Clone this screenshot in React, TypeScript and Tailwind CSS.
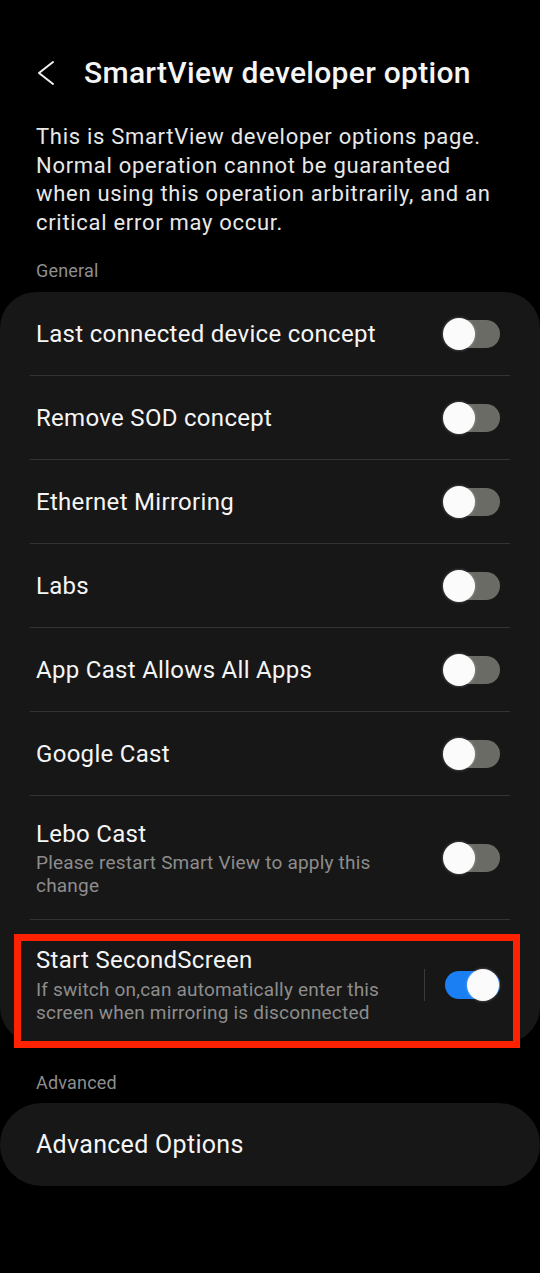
const generalOptions = [
  { title: "Last connected device concept" },
  { title: "Remove SOD concept" },
  { title: "Ethernet Mirroring" },
  { title: "Labs" },
  { title: "App Cast Allows All Apps" },
  { title: "Google Cast" },
];

function Toggle({ on = false }: { on?: boolean }) {
  return (
    <div className="relative w-[57px] h-[32px] shrink-0">
      <div
        className={
          "absolute left-[2px] right-0 top-[2px] h-[28px] rounded-full " +
          (on ? "bg-[#1a7ff2]" : "bg-[#6b6b66]")
        }
      />
      <div
        className={
          "absolute top-0 w-[32px] h-[32px] rounded-full bg-[#fbfbfb] shadow-[0_0_3px_rgba(255,255,255,0.35)] " +
          (on ? "right-[1px]" : "left-0")
        }
      />
    </div>
  );
}

function Divider() {
  return <div className="h-px mx-[30px] bg-[#333333]" />;
}

export default function App() {
  return (
    <div
      className="w-[540px] h-[1273px] bg-black text-[#f5f5f5] overflow-hidden relative"
      style={{ fontFamily: "Roboto, 'Noto Sans', sans-serif" }}
    >
      {/* header */}
      <div className="flex items-center h-[42px] mt-[52px] pl-[36px]">
        <svg width="20" height="26" viewBox="0 0 20 26" fill="none">
          <path d="M17 2 L3 13 L17 24" stroke="#f0f0f0" strokeWidth="2" strokeLinecap="round" strokeLinejoin="round" />
        </svg>
        <h1 className="ml-[28px] text-[30px] leading-[42px] font-medium tracking-[0.3px]">
          SmartView developer option
        </h1>
      </div>

      <p className="mt-[29px] px-[36px] text-[22px] leading-[28.5px] tracking-[0.7px] text-[#e8e8e8]">
        This is SmartView developer options page. Normal operation cannot be guaranteed
        when using this operation arbitrarily, and an critical error may occur.
      </p>

      <div className="mt-[22px] px-[36px] text-[18px] leading-[24px] tracking-[0.2px] text-[#8e8e8e]">
        General
      </div>

      <div className="mt-[9px] bg-[#171717] rounded-[36px] overflow-hidden">
        {generalOptions.map((opt) => (
          <div key={opt.title}>
            <div className="h-[83px] flex items-center justify-between pl-[36px] pr-[40px]">
              <span className="text-[24px] leading-[30px] tracking-[0.3px]">{opt.title}</span>
              <Toggle />
            </div>
            <Divider />
          </div>
        ))}

        <div className="h-[123px] flex items-center justify-between pl-[36px] pr-[40px]">
          <div className="flex flex-col">
            <span className="text-[24px] leading-[30px] tracking-[0.3px]">Lebo Cast</span>
            <span className="mt-[2px] text-[19px] leading-[23px] tracking-[0.2px] text-[#8d8d8d] w-[360px]">
              Please restart Smart View to apply this change
            </span>
          </div>
          <Toggle />
        </div>
        <Divider />

        <div className="h-[123px] flex items-center justify-between pl-[36px] pr-[40px] pt-[6px]">
          <div className="flex flex-col">
            <span className="text-[24px] leading-[30px] tracking-[0.3px]">Start SecondScreen</span>
            <span className="mt-[3px] text-[19px] leading-[23px] tracking-[0.2px] text-[#8d8d8d] w-[365px]">
              If switch on,can automatically enter this screen when mirroring is disconnected
            </span>
          </div>
          <div className="flex items-center">
            <div className="w-px h-[32px] bg-[#3a3a3a] mr-[18px]" />
            <Toggle on />
          </div>
        </div>
      </div>

      <div className="mt-[28px] px-[36px] text-[18px] leading-[24px] tracking-[0.2px] text-[#8e8e8e]">
        Advanced
      </div>

      <div className="mt-[8px] h-[83px] bg-[#171717] rounded-full flex items-center pl-[36px]">
        <span className="text-[25px] leading-[30px] tracking-[0.3px]">Advanced Options</span>
      </div>

      {/* red highlight annotation */}
      <div className="absolute left-[14px] top-[934px] w-[506px] h-[114px] border-[7px] border-[#ff2200] pointer-events-none" />
    </div>
  );
}
